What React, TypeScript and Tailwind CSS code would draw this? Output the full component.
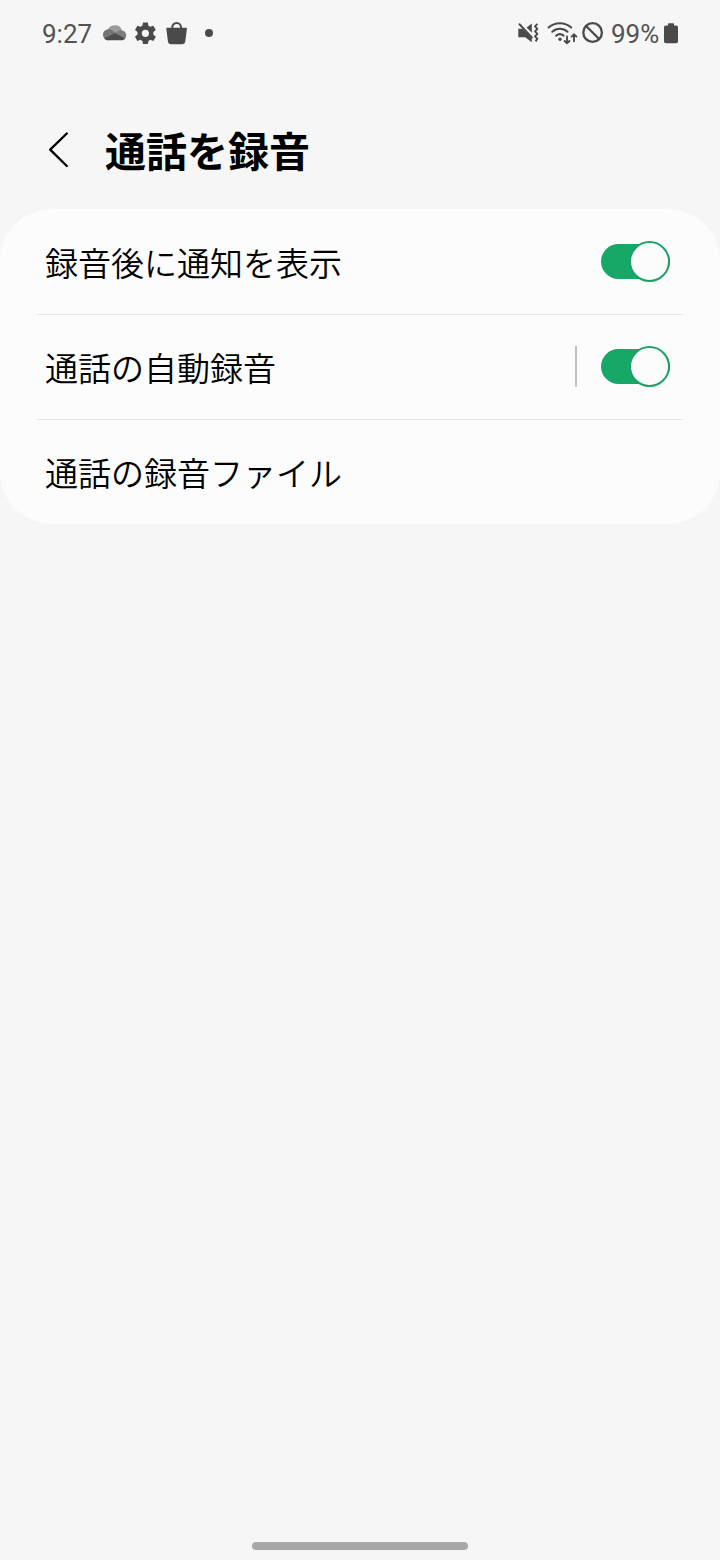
import clsx from "clsx";

function CloudIcon() {
  return (
    <svg className="ml-[11px] h-[16px] w-[24px]" viewBox="0 0 24 16">
      <path d="M5 5.2A7 6 0 0 1 18.6 4.6L20 8 5 9Z" fill="#9a9a9a" />
      <path d="M5.4 4.2C2.2 4.3 0 6.7 0 9.6c0 3 2.2 5.6 5 5.6L16 9.8 9.4 5.4C8.2 4.6 6.8 4.2 5.4 4.2Z" fill="#747474" />
      <path d="M18.2 5.2c3 .1 5 2.4 5 5 0 1.6-.6 3-1.8 4L11.6 9.4l3-3.2c1-.7 2.3-1 3.6-1Z" fill="#7d7d7d" />
      <path d="M12.2 8.2 22.2 13.4c-1 1.2-2.3 1.8-3.8 1.8H5.2c-1.7 0-3-.7-4-1.8Z" fill="#4d4d4d" />
    </svg>
  );
}

function GearIcon() {
  return (
    <svg className="ml-[7px] h-[22px] w-[22px]" viewBox="0 0 22 22" fill="#4a4a4a">
      <path
        transform="translate(.4 .3)"
        fillRule="evenodd"
        d="M8.6.2h4.8l.6 3.2 1.9 1.1 3.1-1.1 2.4 4.2-2.5 2.2v2.4l2.5 2.2-2.4 4.2-3.1-1.1-1.9 1.1-.6 3.2H8.6L8 18.6l-1.9-1.1L3 18.6.6 14.4l2.5-2.2V9.8L.6 7.6 3 3.4l3.1 1.1L8 3.4ZM11 7.4a3.6 3.6 0 1 0 0 7.2 3.6 3.6 0 0 0 0-7.2Z"
      />
    </svg>
  );
}

function BagIcon() {
  return (
    <svg className="ml-[10px] h-[23px] w-[22px]" viewBox="0 0 22 23">
      <path d="M6.2 7V5.4a4.4 4.4 0 0 1 8.8 0V7" fill="none" stroke="#4a4a4a" strokeWidth="2" />
      <path d="M.7 5.8h19.8q.5 0 .4.6l-1.6 12.8q-.4 3-3.2 3H5.1q-2.8 0-3.2-3L.3 6.4q-.1-.6.4-.6Z" fill="#4a4a4a" />
    </svg>
  );
}

function MuteIcon() {
  return (
    <svg className="h-[22px] w-[22px]" viewBox="0 0 22 22" fill="#4a4a4a">
      <path d="M.3 6.8h4.2l9.3 9.4v4.1l-6.6-5.1H.3Z" />
      <path d="M8.6 5.6 13.8 1.6v9.2Z" />
      <path d="M1.5 2.3 13.8 15.4" stroke="#4a4a4a" strokeWidth="2" strokeLinecap="round" />
      <path
        d="M19.4 1.8 17 4.3l2.4 2.5L17 9.3l2.4 2.5-2.4 2.5 2.4 2.5-1.8 2.6"
        fill="none"
        stroke="#4a4a4a"
        strokeWidth="1.9"
        strokeLinejoin="round"
      />
    </svg>
  );
}

function WifiIcon() {
  return (
    <svg className="ml-[7px] h-[24px] w-[31px]" viewBox="0 0 31 24" fill="none" stroke="#4a4a4a" strokeWidth="2.1" strokeLinecap="round">
      <path d="M1.6 6.5a17 17 0 0 1 22.6 0" />
      <path d="M5.3 10.7a11.4 11.4 0 0 1 15.2 0" />
      <path d="M9.2 14.6a6 6 0 0 1 7.4 0" />
      <circle cx="13" cy="18.2" r="1.7" fill="#4a4a4a" stroke="none" />
      <path d="M20 15.4v6.8M17.6 20l2.4 2.3 2.4-2.3M27 20.2v-6.8M24.6 15.6l2.4-2.3 2.4 2.3" strokeWidth="1.9" />
    </svg>
  );
}

function BlockIcon() {
  return (
    <svg className="ml-[4px] h-[22px] w-[22px]" viewBox="0 0 22 22" fill="none" stroke="#4a4a4a" strokeWidth="2.3">
      <circle cx="10.6" cy="10.5" r="9.3" />
      <path d="m4.1 4 13 13" />
    </svg>
  );
}

function BatteryIcon() {
  return (
    <svg className="ml-[5px] h-[21px] w-[14px]" viewBox="0 0 14 21" fill="#4a4a4a">
      <path d="M4 2.5V1q0-.7.7-.7h4.6q.7 0 .7.7v1.5h2.2q1.8 0 1.8 1.8v14.2q0 1.8-1.8 1.8H1.8Q0 20.3 0 18.5V4.3q0-1.8 1.8-1.8Z" />
    </svg>
  );
}

function StatusBar() {
  return (
    <header className="flex h-[66px] items-center justify-between px-[42px] font-[Roboto,sans-serif] text-[26px] leading-none text-[#525252]">
      <div className="flex items-center">
        <span className="w-[50px] whitespace-nowrap pt-[2px]">9:27</span>
        <CloudIcon />
        <GearIcon />
        <BagIcon />
        <span className="ml-[17px] size-2 rounded-full bg-[#4a4a4a]" />
      </div>
      <div className="flex items-center">
        <MuteIcon />
        <WifiIcon />
        <BlockIcon />
        <span className="ml-[7px] w-[48px] whitespace-nowrap pt-[2px]">99%</span>
        <BatteryIcon />
      </div>
    </header>
  );
}

function Toggle() {
  return (
    <button type="button" role="switch" aria-checked="true" className="flex h-[41px] w-[70px] items-center">
      <span className="flex h-[35px] w-[69px] items-center justify-end rounded-full bg-[#15a866]">
        <span className="h-[41px] w-[41px] shrink-0 rounded-full border-2 border-[#1fa068] bg-[#fcfcfc]" />
      </span>
    </button>
  );
}

interface SettingRow {
  label: string;
  toggle?: boolean;
  separated?: boolean;
}

const rows: SettingRow[] = [
  { label: "録音後に通知を表示", toggle: true },
  { label: "通話の自動録音", toggle: true, separated: true },
  { label: "通話の録音ファイル" },
];

export default function App() {
  return (
    <div className="flex h-[1560px] w-[720px] flex-col bg-[#f6f6f6] font-['Noto_Sans_CJK_JP',sans-serif] text-black" lang="ja">
      <StatusBar />

      <div className="flex h-[143px] items-center pb-[11px] pl-[48px] pt-[36px]">
        <svg className="h-[36px] w-[21px]" viewBox="0 0 21 36" fill="none" stroke="#000" strokeWidth="2.3" strokeLinecap="round" strokeLinejoin="round">
          <path d="M18.8 1.5 2.2 17.6l16.6 16.4" />
        </svg>
        <h1 className="ml-[36px] pb-[2px] text-[41px] font-bold leading-[60px]">通話を録音</h1>
      </div>

      <main className="h-[315px] rounded-[52px] bg-[#fcfcfc] px-[37px]">
        {rows.map((row, i) => (
          <div
            key={row.label}
            className={clsx(
              "flex h-[105px] items-center justify-between pl-2 pr-[12px]",
              i < rows.length - 1 && "shadow-[0_1px_0_#e6e6e6]"
            )}
          >
            <span className="text-[33px] font-[350] leading-[48px]">{row.label}</span>
            {row.toggle && (
              <div className="flex items-center">
                {row.separated && <span className="mr-[24px] h-[41px] w-[2px] bg-[#c2c2c2]" />}
                <Toggle />
              </div>
            )}
          </div>
        ))}
      </main>

      <div className="mt-auto flex h-[18px] justify-center">
        <span className="h-2 w-[216px] rounded-full bg-[#a8a8a8]" />
      </div>
    </div>
  );
}
